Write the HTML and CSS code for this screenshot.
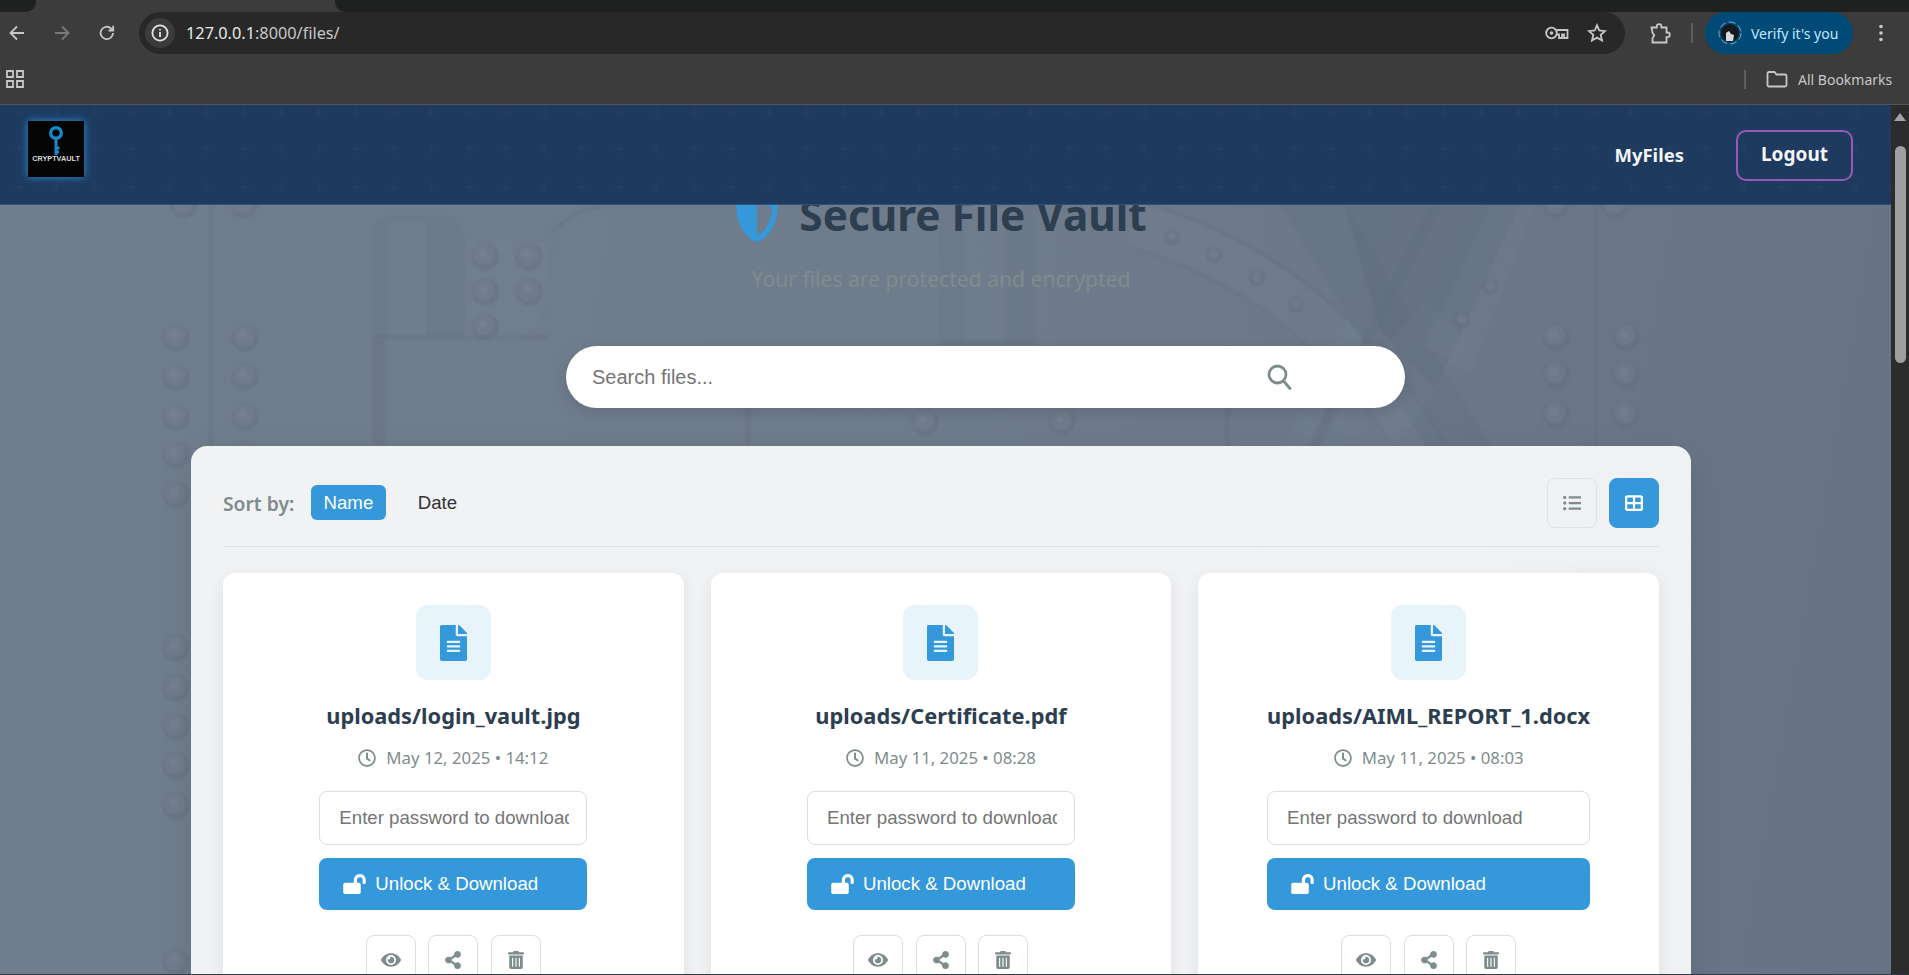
FILE: index.html
```html
<!DOCTYPE html>
<html lang="en">
<head>
<meta charset="utf-8">
<title>Secure File Vault</title>
<link rel="stylesheet" href="styles.css">
</head>
<body>
<svg class="defs" width="0" height="0" aria-hidden="true">
  <defs>
    <symbol id="i-file" viewBox="0 0 384 512"><path d="M224 136V0H24C10.700 0 0 10.700 0 24v464c0 13.300 10.700 24 24 24h336c13.300 0 24-10.700 24-24V160H248c-13.200 0-24-10.800-24-24zm64 236c0 6.600-5.400 12-12 12H108c-6.600 0-12-5.400-12-12v-8c0-6.600 5.400-12 12-12h168c6.600 0 12 5.400 12 12v8zm0-64c0 6.600-5.400 12-12 12H108c-6.600 0-12-5.400-12-12v-8c0-6.600 5.400-12 12-12h168c6.600 0 12 5.400 12 12v8zm0-72v8c0 6.600-5.400 12-12 12H108c-6.600 0-12-5.400-12-12v-8c0-6.600 5.400-12 12-12h168c6.600 0 12 5.400 12 12zm96-114.100v6.100H256V0h6.100c6.400 0 12.500 2.500 17 7l97.900 98c4.500 4.500 7 10.600 7 16.900z"/></symbol>
    <symbol id="i-clock" viewBox="0 0 512 512"><path d="M256 8C119 8 8 119 8 256s111 248 248 248 248-111 248-248S393 8 256 8zm0 448c-110.500 0-200-89.500-200-200S145.500 56 256 56s200 89.500 200 200-89.500 200-200 200zm61.800-104.400l-84.900-61.700c-3.100-2.300-4.900-5.900-4.900-9.700V116c0-6.600 5.400-12 12-12h32c6.600 0 12 5.400 12 12v141.700l66.800 48.600c5.400 3.900 6.500 11.400 2.600 16.800L334.600 349c-3.900 5.300-11.400 6.500-16.800 2.600z"/></symbol>
    <symbol id="i-open" viewBox="0 0 576 512"><path d="M423.500 0C339.500.3 272 69.500 272 153.500V224H48c-26.500 0-48 21.500-48 48v192c0 26.500 21.500 48 48 48h352c26.500 0 48-21.500 48-48V272c0-26.500-21.500-48-48-48h-48v-71.100c0-39.600 31.700-72.500 71.300-72.900 40-.4 72.700 32.100 72.700 72v80c0 13.300 10.700 24 24 24h32c13.300 0 24-10.700 24-24v-80C576 68 507.500-.3 423.500 0z"/></symbol>
    <symbol id="i-eye" viewBox="0 0 576 512"><path d="M572.520 241.400C518.290 135.590 410.930 64 288 64S57.680 135.640 3.480 241.410a32.350 32.350 0 0 0 0 29.190C57.710 376.410 165.070 448 288 448s230.320-71.640 284.520-177.410a32.350 32.350 0 0 0 0-29.190zM288 400a144 144 0 1 1 144-144 143.930 143.930 0 0 1-144 144zm0-240a95.310 95.310 0 0 0-25.310 3.790 47.850 47.850 0 0 1-66.900 66.900A95.780 95.780 0 1 0 288 160z"/></symbol>
    <symbol id="i-share" viewBox="0 0 448 512"><path d="M352 320c-22.608 0-43.387 7.819-59.791 20.895l-102.486-64.054a96.551 96.551 0 0 0 0-41.683l102.486-64.054C308.613 184.181 329.392 192 352 192c53.019 0 96-42.981 96-96S405.019 0 352 0s-96 42.981-96 96c0 7.158.79 14.130 2.276 20.841L155.790 180.895C139.387 167.819 118.608 160 96 160c-53.019 0-96 42.981-96 96s42.981 96 96 96c22.608 0 43.387-7.819 59.791-20.895l102.486 64.054A96.301 96.301 0 0 0 256 416c0 53.019 42.981 96 96 96s96-42.981 96-96-42.981-96-96-96z"/></symbol>
    <symbol id="i-trash" viewBox="0 0 448 512"><path d="M32 464a48 48 0 0 0 48 48h288a48 48 0 0 0 48-48V128H32zm272-256a16 16 0 0 1 32 0v224a16 16 0 0 1-32 0zm-96 0a16 16 0 0 1 32 0v224a16 16 0 0 1-32 0zm-96 0a16 16 0 0 1 32 0v224a16 16 0 0 1-32 0zM432 32H312l-9.400-18.700A24 24 0 0 0 281.100 0H166.800a23.720 23.720 0 0 0-21.400 13.300L136 32H16A16 16 0 0 0 0 48v32a16 16 0 0 0 16 16h416a16 16 0 0 0 16-16V48a16 16 0 0 0-16-16z"/></symbol>
    <g id="rivet">
      <circle r="13.500" fill="#5d6a7a" opacity=".55"/>
      <circle cx="-1" cy="-2" r="10.500" fill="#73808f" opacity=".8"/>
      <circle cx="-2" cy="-3" r="4" fill="#7d8a99" opacity=".6"/>
    </g>
    <g id="stud">
      <circle r="8" fill="#5d6a7a" opacity=".6"/>
      <circle cy="-1" r="5" fill="#74818f" opacity=".8"/>
    </g>
  </defs>
</svg>

<header class="chrome">
  <div class="tabstrip"><div class="strip-left"></div><div class="strip-right"></div></div>
  <div class="toolbar">
    <svg class="tool-icon" width="20" height="20" viewBox="0 0 20 20"><path d="M17 10H4M10 3.500L3.500 10l6.500 6.500" class="line"/></svg>
    <svg class="tool-icon dim" width="20" height="20" viewBox="0 0 20 20"><path d="M3 10h13M10 3.500l6.500 6.500-6.500 6.500" class="line"/></svg>
    <svg class="tool-icon" width="20" height="20" viewBox="0 0 20 20"><path d="M16 10a6.200 6.200 0 1 1-1.900-4.500L16 7.300M16.200 2.800v4.700h-4.700" class="line"/></svg>
    <div class="omnibox">
      <span class="site-chip"><svg width="18" height="18" viewBox="0 0 18 18"><circle cx="9" cy="9" r="7.600" class="line"/><path d="M9 8v5M9 5v1.600" class="line"/></svg></span>
      <span class="url"><b class="url-host">127.0.0.1</b>:8000/files/</span>
      <svg class="omni-key" width="24" height="16" viewBox="0 0 24 16"><circle cx="6.500" cy="8" r="5.300" class="line"/><circle cx="6.500" cy="8" r="1.800" class="fill"/><path d="M11.500 5h11v8h-3.500v-3.500h-2V13h-3v-3.500h-2.500" class="line"/></svg>
      <svg class="omni-star" width="20" height="20" viewBox="0 0 20 20"><path d="M10 2.300l2.300 5.200 5.700.6-4.300 3.800 1.300 5.600L10 14.600l-5 2.900 1.300-5.600L2 8.100l5.700-.6z" class="line"/></svg>
    </div>
    <svg class="puzzle" width="22" height="22" viewBox="0 0 22 22"><path d="M2.500 5.500h5.300V4.500a2.300 2.300 0 0 1 4.600 0v1h5.100v5h1a2.300 2.300 0 0 1 0 4.600h-1v5.400h-14v-4.200l1.700-2.800-1.700-3z" class="line"/></svg>
    <span class="vsep"></span>
    <div class="profile">
      <svg width="24" height="24" viewBox="0 0 24 24"><circle cx="12" cy="12" r="11" fill="none" stroke="#7fa9c4" stroke-width="1" stroke-dasharray="7 3"/><circle cx="12" cy="12" r="9" fill="#15181c"/><path d="M8 20v-8l3-2 2 3 3 1-1 6z" fill="#d9dcdf"/></svg>
      <span>Verify it's you</span>
    </div>
    <svg class="kebab" width="6" height="20" viewBox="0 0 6 20"><circle cx="3" cy="3.500" r="1.800"/><circle cx="3" cy="10" r="1.800"/><circle cx="3" cy="16.500" r="1.800"/></svg>
  </div>
  <div class="bookmarks">
    <svg class="apps" width="18" height="18" viewBox="0 0 18 18"><path d="M1 1h6v6H1zM11 1h6v6h-6zM1 11h6v6H1zM11 11h6v6h-6z" class="line"/></svg>
    <span class="vsep short"></span>
    <svg class="folder" width="22" height="18" viewBox="0 0 22 18"><path d="M1.500 3.500a1.500 1.500 0 0 1 1.500-1.500h5.500l2 2.500H19a1.500 1.500 0 0 1 1.500 1.500v9a1.500 1.500 0 0 1-1.500 1.500H3A1.500 1.500 0 0 1 1.500 15z" class="line"/></svg>
    <span class="bm-label">All Bookmarks</span>
  </div>
</header>

<div class="viewport">
  <div class="page">
    <svg class="backdrop" viewBox="0 105 1891 869" preserveAspectRatio="none" aria-hidden="true">
      <!-- door ring, visible on the upper right only -->
      <path d="M1130 223A479 479 0 0 1 1450 510" fill="none" stroke="#7b8898" stroke-opacity=".22" stroke-width="46"/>
      <path d="M1130 199A502 502 0 0 1 1470 498" fill="none" stroke="#5c6979" stroke-opacity=".5" stroke-width="3"/>
      <path d="M1130 247A456 456 0 0 1 1430 522" fill="none" stroke="#5c6979" stroke-opacity=".35" stroke-width="3"/>
      <!-- crossed bars -->
      <polygon points="1405,205 1470,205 1290,560 1225,560" fill="#79869a" opacity=".2"/>
      <polygon points="1430,205 1442,205 1262,560 1250,560" fill="#566374" opacity=".4"/>
      <polygon points="1280,205 1345,205 1560,560 1495,560" fill="#5f6c7c" opacity=".45"/>
      <polygon points="1345,205 1520,205 1435,390 1380,330" fill="#56636f" opacity=".5"/>
      <polygon points="1490,205 1535,205 1470,375 1425,345" fill="#7a8797" opacity=".25"/>
      <polygon points="1265,385 1305,350 1350,410 1310,450" fill="#7a8797" opacity=".18"/>
      <polygon points="1330,415 1425,300 1470,345 1380,465" fill="#7d8a9a" opacity=".18"/>
      <!-- left hinge and plate -->
      <path d="M373 337V232q0-16 18-17h52q21 2 21 24v98z" fill="#5f6c7c" opacity=".28"/>
      <rect x="388" y="222" width="38" height="115" fill="#7b8898" opacity=".4"/>
      <rect x="373" y="335" width="175" height="4" fill="#5b6878" opacity=".5"/>
      <path d="M464 240h88l-9 80-20 18h-59z" fill="#7b8898" opacity=".25" stroke="#5c6979" stroke-opacity=".5"/>
      <rect x="373" y="340" width="12" height="106" fill="#5b6878" opacity=".35"/>
      <path d="M551 233q20-22 49-26" fill="none" stroke="#5c6979" stroke-opacity=".5" stroke-width="3"/>
      <!-- centre hinge -->
      <rect x="939" y="205" width="97" height="137" fill="#5f6c7c" opacity=".18"/>
      <rect x="965" y="205" width="40" height="137" fill="#7b8898" opacity=".3"/>
      <rect x="939" y="340" width="97" height="6" fill="#5b6878" opacity=".4"/>
      <rect x="745" y="346" width="6" height="100" fill="#5b6878" opacity=".35"/>
      <rect x="1225" y="346" width="5" height="100" fill="#5b6878" opacity=".3"/>
      <!-- seams -->
      <rect x="209" y="205" width="4" height="770" fill="#5c6979" opacity=".5"/>
      <rect x="1594" y="205" width="3" height="770" fill="#5c6979" opacity=".3"/>
      <!-- left rivet columns -->
      <use href="#rivet" x="184" y="205"/><use href="#rivet" x="244" y="205"/>
      <use href="#rivet" x="176" y="338"/><use href="#rivet" x="245" y="338"/>
      <use href="#rivet" x="176" y="377"/><use href="#rivet" x="245" y="377"/>
      <use href="#rivet" x="176" y="417"/><use href="#rivet" x="245" y="417"/>
      <use href="#rivet" x="176" y="455"/><use href="#rivet" x="245" y="455"/>
      <use href="#rivet" x="176" y="495"/>
      <use href="#rivet" x="176" y="648"/><use href="#rivet" x="176" y="688"/>
      <use href="#rivet" x="176" y="727"/><use href="#rivet" x="176" y="766"/>
      <use href="#rivet" x="176" y="806"/><use href="#rivet" x="176" y="962"/>
      <!-- plate rivets -->
      <use href="#rivet" x="485" y="257"/><use href="#rivet" x="529" y="257"/>
      <use href="#rivet" x="485" y="292"/><use href="#rivet" x="529" y="292"/>
      <use href="#rivet" x="485" y="327"/>
      <!-- lower centre rivets -->
      <use href="#rivet" x="925" y="422"/><use href="#rivet" x="1062" y="422"/>
      <!-- ring studs -->
      <use href="#stud" x="1172" y="237"/><use href="#stud" x="1214" y="255"/>
      <use href="#stud" x="1257" y="278"/><use href="#stud" x="1296" y="305"/>
      <use href="#stud" x="1490" y="287"/><use href="#stud" x="1462" y="320"/>
      <!-- right rivet columns -->
      <use href="#rivet" x="1556" y="205"/><use href="#rivet" x="1615" y="205"/>
      <use href="#rivet" x="1556" y="337"/><use href="#rivet" x="1626" y="337"/>
      <use href="#rivet" x="1556" y="375"/><use href="#rivet" x="1626" y="375"/>
      <use href="#rivet" x="1556" y="415"/><use href="#rivet" x="1626" y="415"/>
    </svg>

    <nav class="navbar">
      <div class="logo">
        <svg width="24" height="34" viewBox="0 0 24 34"><circle cx="12" cy="8" r="5.300" fill="none" stroke="#1b87c9" stroke-width="3.400"/><path d="M12 13v17M12 23h3.500M12 27h3" fill="none" stroke="#1b87c9" stroke-width="3"/></svg>
        <span class="logo-text">CRYPTVAULT</span>
      </div>
      <div class="nav-links">
        <a class="nav-link">MyFiles</a>
        <a class="nav-logout">Logout</a>
      </div>
    </nav>

    <main class="content">
      <section class="hero">
        <h1 class="hero-title">
          <svg class="shield" width="44" height="47" viewBox="0 0 512 512" preserveAspectRatio="none"><path d="M466.500 83.700l-192-80a48.150 48.150 0 0 0-36.900 0l-192 80C27.700 91.100 16 108.600 16 128c0 198.500 114.500 335.700 221.500 380.300 11.800 4.900 25.100 4.900 36.900 0C360.100 472.600 496 349.300 496 128c0-19.400-11.700-36.900-29.500-44.300zM256.100 446.300l-.1-381 175.900 73.300c-3.300 151.400-82.100 261.100-175.800 307.700z"/></svg>
          Secure File Vault
        </h1>
        <p class="hero-sub">Your files are protected and encrypted</p>
      </section>

      <div class="search">
        <input class="search-input" type="text" placeholder="Search files...">
        <svg class="search-icon" width="25" height="26" viewBox="0 0 25 26"><circle cx="10.500" cy="10.500" r="8.500"/><path d="M16.500 17l6.500 7.500"/></svg>
      </div>

      <section class="panel">
        <div class="panel-head">
          <div class="sort">
            <span class="sort-label">Sort by:</span>
            <button class="sort-btn active">Name</button>
            <button class="sort-btn">Date</button>
          </div>
          <div class="views">
            <button class="view-btn"><svg width="18" height="18" viewBox="0 0 512 512"><path d="M48 48a48 48 0 1 0 48 48 48 48 0 0 0-48-48zm0 160a48 48 0 1 0 48 48 48 48 0 0 0-48-48zm0 160a48 48 0 1 0 48 48 48 48 0 0 0-48-48zm448 16H176a16 16 0 0 0-16 16v32a16 16 0 0 0 16 16h320a16 16 0 0 0 16-16v-32a16 16 0 0 0-16-16zm0-320H176a16 16 0 0 0-16 16v32a16 16 0 0 0 16 16h320a16 16 0 0 0 16-16V80a16 16 0 0 0-16-16zm0 160H176a16 16 0 0 0-16 16v32a16 16 0 0 0 16 16h320a16 16 0 0 0 16-16v-32a16 16 0 0 0-16-16z"/></svg></button>
            <button class="view-btn active"><svg width="18" height="18" viewBox="0 0 512 512"><path d="M448 96V224H288V96H448zm0 192V416H288V288H448zM224 224H64V96H224V224zM64 288H224V416H64V288zM64 32C28.700 32 0 60.700 0 96V416c0 35.300 28.700 64 64 64H448c35.300 0 64-28.700 64-64V96c0-35.300-28.700-64-64-64H64z"/></svg></button>
          </div>
        </div>

        <div class="file-grid">
          <article class="card">
            <div class="file-tile"><svg width="27" height="36"><use href="#i-file"/></svg></div>
            <div class="file-body">
              <h3 class="file-name">uploads/login_vault.jpg</h3>
              <div class="file-date"><svg width="18" height="18"><use href="#i-clock"/></svg><span>May 12, 2025 • 14:12</span></div>
              <input class="file-pass" type="password" placeholder="Enter password to download">
              <button class="file-unlock"><svg width="23" height="20"><use href="#i-open"/></svg>Unlock &amp; Download</button>
            </div>
            <div class="file-actions">
              <button class="act"><svg width="20" height="18"><use href="#i-eye"/></svg></button>
              <button class="act"><svg width="16" height="18"><use href="#i-share"/></svg></button>
              <button class="act"><svg width="16" height="18"><use href="#i-trash"/></svg></button>
            </div>
          </article>

          <article class="card">
            <div class="file-tile"><svg width="27" height="36"><use href="#i-file"/></svg></div>
            <div class="file-body">
              <h3 class="file-name">uploads/Certificate.pdf</h3>
              <div class="file-date"><svg width="18" height="18"><use href="#i-clock"/></svg><span>May 11, 2025 • 08:28</span></div>
              <input class="file-pass" type="password" placeholder="Enter password to download">
              <button class="file-unlock"><svg width="23" height="20"><use href="#i-open"/></svg>Unlock &amp; Download</button>
            </div>
            <div class="file-actions">
              <button class="act"><svg width="20" height="18"><use href="#i-eye"/></svg></button>
              <button class="act"><svg width="16" height="18"><use href="#i-share"/></svg></button>
              <button class="act"><svg width="16" height="18"><use href="#i-trash"/></svg></button>
            </div>
          </article>

          <article class="card">
            <div class="file-tile"><svg width="27" height="36"><use href="#i-file"/></svg></div>
            <div class="file-body">
              <h3 class="file-name">uploads/AIML_REPORT_1.docx</h3>
              <div class="file-date"><svg width="18" height="18"><use href="#i-clock"/></svg><span>May 11, 2025 • 08:03</span></div>
              <input class="file-pass" type="password" placeholder="Enter password to download">
              <button class="file-unlock"><svg width="23" height="20"><use href="#i-open"/></svg>Unlock &amp; Download</button>
            </div>
            <div class="file-actions">
              <button class="act"><svg width="20" height="18"><use href="#i-eye"/></svg></button>
              <button class="act"><svg width="16" height="18"><use href="#i-share"/></svg></button>
              <button class="act"><svg width="16" height="18"><use href="#i-trash"/></svg></button>
            </div>
          </article>
        </div>
      </section>
    </main>
  </div>
  <aside class="scrollbar">
    <span class="scroll-up"></span>
    <span class="scroll-thumb"></span>
  </aside>
</div>
<div class="window-edge"></div>
</body>
</html>
```
FILE: styles.css
```css
* { box-sizing: border-box; }
html, body { margin: 0; height: 975px; overflow: hidden; }
body {
  display: flex;
  flex-direction: column;
  font-family: "Noto Sans", "Open Sans", sans-serif;
  background: #3c3c3c;
}
.defs { position: absolute; }
button { font: inherit; cursor: pointer; }

/* browser chrome */
.chrome { flex: none; height: 105px; background: #3c3c3c; border-bottom: 1px solid #555; color: #c7c7c7; }
.tabstrip { display: flex; justify-content: space-between; height: 12px; }
.strip-left { width: 36px; background: #1f2020; border-bottom-right-radius: 10px; }
.strip-right { width: 1574px; background: #1f2020; border-bottom-left-radius: 10px; }
.line { fill: none; stroke: currentColor; stroke-width: 1.800; }
.fill { fill: currentColor; }
.toolbar { display: flex; align-items: flex-start; height: 50px; padding-left: 7px; color: #c7c7c7; }
.tool-icon { flex: none; margin: 11px 25px 0 0; }
.tool-icon.dim { color: #7a7a7a; }
.tool-icon:nth-child(3) { margin-right: 22px; }
.omnibox {
  display: flex; align-items: center;
  width: 1486px; height: 42px; padding-left: 6px;
  background: #282828; border-radius: 21px;
}
.site-chip {
  display: flex; align-items: center; justify-content: center;
  width: 30px; height: 30px; border-radius: 50%;
  background: #3c3c3c; color: #e3e3e3;
}
.url { margin-left: 11px; font-size: 16.300px; color: #c7c7c7; flex: 1; }
.url-host { font-weight: 400; color: #e8e8e8; }
.omni-key { margin-right: 18px; }
.omni-star { margin-right: 18px; }
.puzzle { flex: none; margin: 10px 0 0 24px; }
.vsep { flex: none; width: 2px; height: 20px; margin: 11px 12px 0 20px; background: #5f5f5f; }
.profile {
  display: flex; align-items: center; gap: 9px;
  width: 148px; height: 42px; padding-left: 13px;
  background: #004a77; border-radius: 21px;
  color: #c2e7ff; font-size: 14px;
}
.kebab { flex: none; margin: 11px 0 0 25px; fill: #c7c7c7; }
.bookmarks { display: flex; align-items: center; height: 42px; padding: 0 0 8px 6px; }
.apps { flex: none; margin-right: 1720px; }
.vsep.short { height: 19px; margin: 0 20px 0 0; }
.folder { flex: none; margin-right: 10px; }
.bm-label { font-size: 14px; white-space: nowrap; }

/* viewport */
.viewport { flex: 1; display: flex; min-height: 0; }
.page {
  position: relative; flex: 1; min-width: 0; overflow: hidden;
  background: linear-gradient(100deg, #707d8d 0%, #6f7c8c 45%, #677385 100%);
}
.backdrop { position: absolute; left: 0; top: 0; width: 100%; height: 100%; opacity: .62; filter: blur(.8px); }
.scrollbar { position: relative; flex: none; width: 18px; background: #2c2c2c; }
.scroll-up {
  position: absolute; left: 3px; top: 8px; width: 0; height: 0;
  border-left: 6px solid transparent; border-right: 6px solid transparent; border-bottom: 8px solid #a3a3a3;
}
.scroll-thumb { position: absolute; left: 4px; top: 41px; width: 11px; height: 217px; background: #9f9f9f; border-radius: 6px; }
.window-edge { flex: none; height: 1px; background: #333a45; }

/* nav */
.navbar {
  position: relative; z-index: 2;
  display: flex; align-items: flex-start; justify-content: space-between;
  height: 100px; padding: 16px 38px 0 28px;
  background-color: #1e3a5f;
  background-image: url("data:image/svg+xml,%3Csvg xmlns='http://www.w3.org/2000/svg' width='37.500' height='37.500'%3E%3Cpath d='M19 3v8M15 7h8' stroke='%23ffffff' stroke-opacity='.035' stroke-width='1'/%3E%3C/svg%3E");
  border-bottom: 1px solid #31507e;
}
.logo {
  display: flex; flex-direction: column; align-items: center;
  width: 56px; height: 56px; padding-top: 4px;
  background: #050505; box-shadow: 0 0 8px 0 #2d8fd0;
}
.logo-text { margin-top: -5px; font: 700 7.300px/9px "Liberation Sans", sans-serif; color: #d8d8d8; }
.nav-links { display: flex; align-items: flex-start; }
.nav-link { margin: 19px 52px 0 0; font-size: 18.500px; line-height: 30px; font-weight: 700; color: #f2f4f6; }
.nav-logout {
  width: 117px; height: 51px; margin-top: 9px;
  border: 2px solid #9b59b6; border-radius: 10px;
  font-size: 19px; line-height: 45px; font-weight: 700; color: #f4f6f8; text-align: center;
}

/* content */
.content { position: relative; display: flex; flex-direction: column; width: 1500px; margin: -20px 0 0 191px; }
.hero { text-align: center; }
.hero-title {
  display: flex; align-items: center; justify-content: center; gap: 20px;
  height: 60px; margin: 0;
  font-size: 42.300px; line-height: 60px; font-weight: 700; color: #2c3e50;
}
.shield { flex: none; fill: #3498db; margin-top: 6px; }
.hero-sub { margin: 21px 0 0; font-size: 21.100px; line-height: 26px; color: #7f8c8d; }

.search {
  display: flex; align-items: center;
  width: 839px; height: 62px; margin: 54px 0 0 375px; padding: 0 113px 0 26px;
  background: #fff; border-radius: 31px; box-shadow: 0 4px 15px rgba(0, 0, 0, .12);
}
.search-input { flex: 1; min-width: 0; border: 0; outline: 0; padding: 0; background: none; font: 20px "Liberation Sans", sans-serif; }
.search-input::placeholder { color: #757575; }
.search-icon { flex: none; fill: none; stroke: #7f8c8d; stroke-width: 2.800; stroke-linecap: round; }

.panel {
  flex: none; height: 700px; margin-top: 38px; padding: 32px;
  background: rgba(255, 255, 255, .9); border-radius: 16px;
  box-shadow: 0 8px 32px rgba(0, 0, 0, .1);
}
.panel-head {
  display: flex; align-items: flex-start; justify-content: space-between;
  height: 69px; border-bottom: 1px solid #dfe1e4;
}
.sort { display: flex; align-items: center; height: 50px; }
.sort-label { width: 88px; font-size: 19.300px; font-weight: 600; color: #7f8c8d; }
.sort-btn {
  height: 35px; padding: 0 12.500px; border: 0; border-radius: 6px; background: none;
  font: 18.670px "Liberation Sans", sans-serif; color: #333;
  margin-right: 19.500px; margin-top: -1px;
}
.sort-btn.active { background: #3498db; color: #fff; }
.views { display: flex; gap: 12px; }
.view-btn {
  display: flex; align-items: center; justify-content: center;
  width: 50px; height: 50px; padding: 0;
  border: 1px solid #dfe1e4; border-radius: 8px; background: none; fill: #7f8c8d;
}
.view-btn.active { border-color: #3498db; background: #3498db; fill: #fff; }

.file-grid { display: grid; grid-template-columns: repeat(3, 1fr); gap: 27px; margin-top: 26px; }
.card {
  display: flex; flex-direction: column; align-items: center;
  height: 600px; padding-top: 32px;
  background: #fff; border-radius: 12px;
  box-shadow: 0 4px 15px rgba(0, 0, 0, .08);
}
.file-tile {
  display: flex; align-items: center; justify-content: center;
  width: 75px; height: 75px; border-radius: 12px;
  background: #e8f4fb; fill: #3498db;
}
.file-body { display: flex; flex-direction: column; align-items: center; width: fit-content; min-width: 268px; margin-top: 21px; }
.file-name { margin: 0; font-size: 21.800px; line-height: 30px; font-weight: 700; color: #2c3e50; white-space: nowrap; }
.file-date { display: flex; align-items: center; gap: 10px; margin-top: 15px; font-size: 16.800px; line-height: 24px; color: #7f8c8d; fill: #7f8c8d; }
.file-pass {
  width: 0; min-width: 100%; height: 54px; margin-top: 21px; padding: 0 17px 0 19px;
  border: 1px solid #ddd; border-radius: 8px; outline: 0; background: #fff;
  font: 18.670px "Liberation Sans", sans-serif;
}
.file-pass::placeholder { color: #757575; }
.file-unlock {
  display: flex; align-items: center; gap: 9px;
  width: 100%; height: 52px; margin-top: 13px; padding: 0 0 0 24px;
  border: 0; border-radius: 8px; background: #3498db; fill: #fff; color: #fff;
  font: 18.670px "Liberation Sans", sans-serif;
}
.file-actions { display: flex; gap: 12.500px; margin-top: 25px; }
.act {
  display: flex; align-items: center; justify-content: center;
  width: 50px; height: 50px; padding: 0;
  border: 1px solid #ddd; border-radius: 8px; background: #fff; fill: #7f8c8d;
}
```
